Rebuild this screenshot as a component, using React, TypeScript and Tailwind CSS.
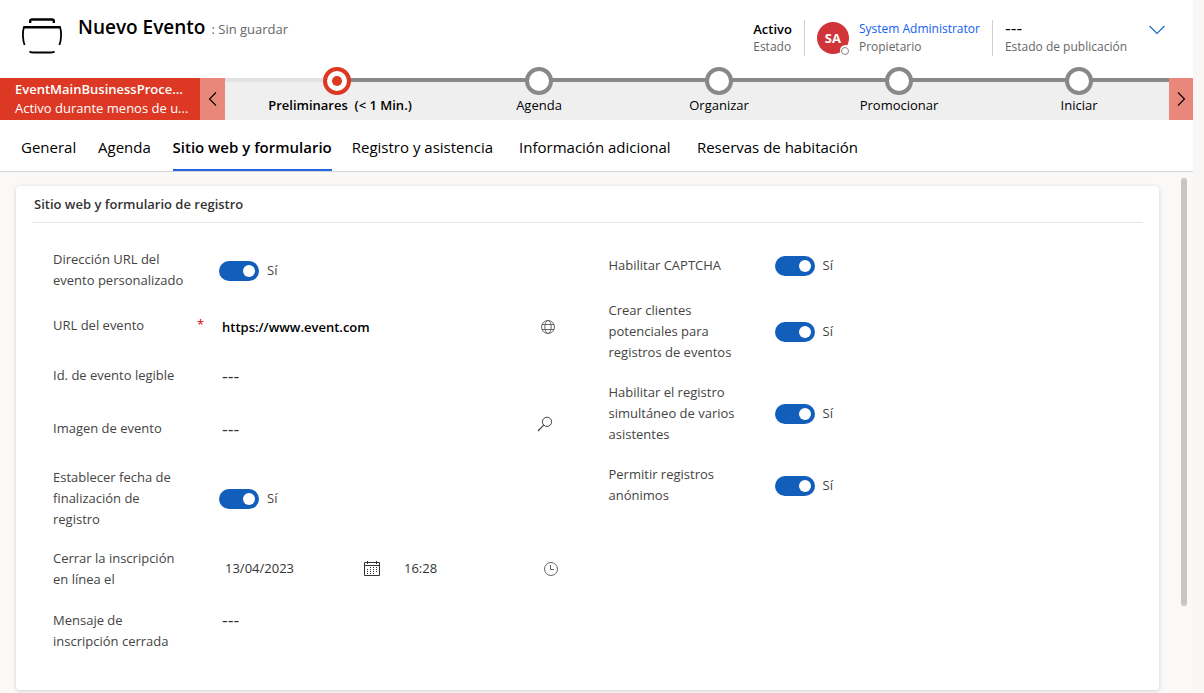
import { useState, type ReactNode } from "react";

const stages = ["Agenda", "Organizar", "Promocionar", "Iniciar"];

const tabs = [
  "General",
  "Agenda",
  "Sitio web y formulario",
  "Registro y asistencia",
  "Información adicional",
  "Reservas de habitación",
];

function EventIcon() {
  return (
    <svg className="h-9 w-10" viewBox="0 0 40 36" fill="none" stroke="#000" aria-hidden="true">
      <path d="M8.200 5V3Q8.200 1.500 10 1.500H30Q31.800 1.500 31.800 3V5" strokeWidth="2.400" />
      <path d="M2.500 10V9.200H37.500V10" strokeWidth="2.400" />
      <path d="M2 9C0.400 14 0.600 22 2.600 27" strokeWidth="1.800" />
      <path d="M38 9C39.600 14 39.400 22 37.400 27" strokeWidth="1.800" />
      <path d="M7.500 33.500Q9 34.600 12 34.600H28Q31 34.600 32.500 33.500" strokeWidth="2" />
    </svg>
  );
}

function Chevron({ d, className }: { d: string; className: string }) {
  return (
    <svg className={className} viewBox="0 0 16 16" fill="none" stroke="currentColor" aria-hidden="true">
      <path d={d} strokeWidth="1.100" />
    </svg>
  );
}

function GlobeIcon() {
  return (
    <svg className="size-4" viewBox="0 0 16 16" fill="none" stroke="#666" aria-hidden="true">
      <circle cx="8" cy="8" r="6.500" />
      <ellipse cx="8" cy="8" rx="3.200" ry="6.500" />
      <path d="M2 5.500H14M2 10.500H14" />
    </svg>
  );
}

function SearchIcon() {
  return (
    <svg className="size-4" viewBox="0 0 16 16" fill="none" stroke="#444" aria-hidden="true">
      <circle cx="10" cy="5.800" r="4.600" />
      <path d="M6.700 9.200L1 15" strokeWidth="1.200" />
    </svg>
  );
}

function CalendarIcon() {
  return (
    <svg className="size-4" viewBox="0 0 16 16" fill="none" stroke="#333" aria-hidden="true">
      <path d="M0.500 1.500H15.500V14.500H0.500ZM0.500 4.500H15.500M3.500 0V3M12.500 0V3" />
      <path d="M6 6.500H14M3 8.500H14M3 10.500H14M3 12.500H11" strokeDasharray="1 2" />
    </svg>
  );
}

function ClockIcon() {
  return (
    <svg className="size-4" viewBox="0 0 16 16" fill="none" stroke="#666" aria-hidden="true">
      <circle cx="8" cy="8" r="6.500" />
      <path d="M7.500 4V8.500H11" />
    </svg>
  );
}

function Row({
  id,
  label,
  height,
  required,
  alignTop,
  children,
}: {
  id: string;
  label: string;
  height: string;
  required?: boolean;
  alignTop?: boolean;
  children: ReactNode;
}) {
  return (
    <div className={`flex ${alignTop ? "items-start pt-3" : "items-center"} ${height}`}>
      <label htmlFor={id} className="w-[134px] shrink-0 leading-[21px] text-[#444]">
        {label}
      </label>
      <span className="w-8 shrink-0 pl-2.5 text-[#e00000]">{required ? "*" : ""}</span>
      {children}
    </div>
  );
}

function Toggle({ id }: { id: string }) {
  const [on, setOn] = useState(true);
  return (
    <div className="flex items-center gap-2 pt-0.5">
      <input
        id={id}
        type="checkbox"
        role="switch"
        checked={on}
        onChange={() => setOn(!on)}
        className="flex h-5 w-10 appearance-none items-center rounded-full bg-[#8a8886] px-1 before:size-3 before:rounded-full before:bg-white checked:justify-end checked:bg-[#115ebb]"
      />
      <span className="text-[#444]">{on ? "Sí" : "No"}</span>
    </div>
  );
}

function TextValue({ id, value }: { id: string; value?: string }) {
  return (
    <input
      id={id}
      type="text"
      defaultValue={value ?? "---"}
      className={`h-[21px] w-0 min-w-0 flex-1 bg-transparent pl-[3px] outline-none ${value ? "font-semibold text-black" : "font-['DejaVu_Sans',sans-serif] text-base text-[#333]"}`}
    />
  );
}

function IconButton({ label, children }: { label: string; children: ReactNode }) {
  return (
    <button type="button" aria-label={label} className="shrink-0">
      {children}
    </button>
  );
}

export default function App() {
  const [active, setActive] = useState(tabs[2]);
  return (
    <div className="flex min-h-screen bg-[#f8f7f6] font-['Open_Sans',sans-serif] text-[13px] text-black">
      <div className="flex min-w-0 flex-1 flex-col bg-[#faf9f8]">
        <header className="flex h-[78px] items-start bg-white pl-[22px]">
          <div className="pt-[18px]">
            <EventIcon />
          </div>
          <div className="flex items-baseline gap-1.5 pt-[13px] pl-4">
            <h1 className="text-[19px] leading-7 font-semibold">Nuevo Evento</h1>
            <span className="text-[#666]">: Sin guardar</span>
          </div>
          <div className="ml-auto flex items-center pt-5 leading-[18px]">
            <div className="pr-3">
              <div className="font-semibold">Activo</div>
              <div className="text-xs leading-[18px] text-[#666]">Estado</div>
            </div>
            <div className="flex items-center gap-2.5 border-x border-[#d2d0ce] px-3">
              <div className="relative flex size-8 items-center justify-center rounded-full bg-[#d13438] font-bold text-white">
                SA
                <span className="absolute -right-0.5 -bottom-0.5 flex size-[11px] items-center justify-center rounded-full bg-white">
                  <span className="size-2 rounded-full border border-[#8a8886]" />
                </span>
              </div>
              <div>
                <a href="#propietario" className="block text-xs leading-[18px] text-[#1160f5]">
                  System Administrator
                </a>
                <div className="text-xs leading-[18px] text-[#666]">Propietario</div>
              </div>
            </div>
            <div className="pl-3">
              <div className="font-['DejaVu_Sans',sans-serif] text-base leading-[18px]">---</div>
              <div className="text-xs leading-[18px] text-[#666]">Estado de publicación</div>
            </div>
          </div>
          <button type="button" aria-label="Más campos" className="mt-[22px] mr-7 ml-[22px] text-[#0f6cbd]">
            <Chevron d="M0.500 4L8 11.500L15.500 4" className="size-4" />
          </button>
        </header>

        <section className="flex h-[42px] bg-[#efefef]">
          <div className="w-[200px] bg-[#dc3823] pt-0.5 pl-[15px] leading-[19px] text-white">
            <div className="font-semibold">EventMainBusinessProce...</div>
            <div>Activo durante menos de u...</div>
          </div>
          <button type="button" aria-label="Anterior" className="flex w-[25px] items-center justify-center bg-[#e9877b]">
            <Chevron d="M11 1.500L4.500 8L11 14.500" className="size-4" />
          </button>
          <ol className="flex min-w-0 flex-1">
            <li className="flex flex-[224] flex-col items-center">
              <div className="flex h-1 w-full">
                <div className="w-1/2 bg-[#e1e1e1]" />
                <div className="w-1/2 bg-[#8a8886]" />
              </div>
              <span className="relative -mt-[15px] flex size-7 items-center justify-center rounded-full border-4 border-[#dc3823] bg-white">
                <span className="size-2.5 rounded-full bg-[#dc3823]" />
              </span>
              <button type="button" className="pl-1.5 leading-5 font-semibold whitespace-pre">
                {"Preliminares  (< 1 Min.)"}
              </button>
            </li>
            {stages.map((stage) => (
              <li key={stage} className="flex flex-[180] flex-col items-center">
                <div className="h-1 w-full bg-[#8a8886]" />
                <span className="relative -mt-[15px] size-7 rounded-full border-4 border-[#8a8886] bg-white" />
                <button type="button" className="leading-5">
                  {stage}
                </button>
              </li>
            ))}
          </ol>
          <button type="button" aria-label="Siguiente" className="flex w-6 items-center justify-center bg-[#e9877b]">
            <Chevron d="M5 1.500L11.500 8L5 14.500" className="size-4" />
          </button>
        </section>

        <nav role="tablist" className="flex h-[52px] gap-5 border-b border-[#d6d6d6] bg-white pl-[21px] text-[15px]">
          {tabs.map((tab) => (
            <button
              key={tab}
              type="button"
              role="tab"
              aria-selected={tab === active}
              data-label={tab}
              onClick={() => setActive(tab)}
              className={`border-b-2 pt-1.5 text-left whitespace-nowrap after:invisible after:block after:h-0 after:overflow-hidden after:font-semibold after:content-[attr(data-label)] ${tab === active ? "border-[#2266e3] font-semibold" : "border-transparent"}`}
            >
              {tab}
            </button>
          ))}
        </nav>

        <div className="flex flex-1 pb-[3px]">
          <main className="ml-4 min-w-0 flex-1 pt-3.5">
            <section className="rounded bg-white px-4 pb-6 shadow-[0_1px_4px_rgba(0,0,0,0.16)]">
              <h2 className="h-[37px] border-b border-[#e6e6e6] pl-0.5 leading-9 font-semibold text-[#333]">
                Sitio web y formulario de registro
              </h2>
              <form className="grid grid-cols-2 pt-[17px]">
                <div className="pr-[29px] pl-[21px]">
                  <Row id="custom-url" label="Dirección URL del evento personalizado" height="h-[60px]">
                    <Toggle id="custom-url" />
                  </Row>
                  <Row id="event-url" label="URL del evento" height="h-[50px]" required>
                    <div className="flex flex-1 items-center pt-1 pr-[3px]">
                      <TextValue id="event-url" value="https://www.event.com" />
                      <IconButton label="Abrir URL">
                        <GlobeIcon />
                      </IconButton>
                    </div>
                  </Row>
                  <Row id="readable-id" label="Id. de evento legible" height="h-[50px]">
                    <div className="flex flex-1 pt-1">
                      <TextValue id="readable-id" />
                    </div>
                  </Row>
                  <Row id="event-image" label="Imagen de evento" height="h-14">
                    <div className="flex flex-1 items-start pr-1.5">
                      <div className="flex flex-1 pt-1">
                        <TextValue id="event-image" />
                      </div>
                      <IconButton label="Buscar imagen">
                        <SearchIcon />
                      </IconButton>
                    </div>
                  </Row>
                  <Row id="set-end-date" label="Establecer fecha de finalización de registro" height="h-[84px]">
                    <Toggle id="set-end-date" />
                  </Row>
                  <Row id="close-date" label="Cerrar la inscripción en línea el" height="h-[58px]">
                    <div className="flex flex-1 items-center">
                      <input
                        id="close-date"
                        type="text"
                        defaultValue="13/04/2023"
                        className="w-[145px] bg-transparent pl-1.5 text-[#333] outline-none"
                      />
                      <IconButton label="Elegir fecha">
                        <CalendarIcon />
                      </IconButton>
                      <input
                        type="text"
                        aria-label="Hora de cierre"
                        defaultValue="16:28"
                        className="ml-6 w-0 min-w-0 flex-1 bg-transparent text-[#333] outline-none"
                      />
                      <IconButton label="Elegir hora">
                        <ClockIcon />
                      </IconButton>
                    </div>
                  </Row>
                  <Row id="closed-message" label="Mensaje de inscripción cerrada" height="h-[68px]" alignTop>
                    <TextValue id="closed-message" />
                  </Row>
                </div>
                <div className="pl-[21px]">
                  <Row id="captcha" label="Habilitar CAPTCHA" height="h-[50px]">
                    <Toggle id="captcha" />
                  </Row>
                  <Row id="create-leads" label="Crear clientes potenciales para registros de eventos" height="h-[82px]">
                    <Toggle id="create-leads" />
                  </Row>
                  <Row id="multi-register" label="Habilitar el registro simultáneo de varios asistentes" height="h-[82px]">
                    <Toggle id="multi-register" />
                  </Row>
                  <Row id="anonymous" label="Permitir registros anónimos" height="h-[62px]">
                    <Toggle id="anonymous" />
                  </Row>
                </div>
              </form>
            </section>
          </main>
          <div className="flex w-[34px] flex-col pt-1.5 pl-[22px]">
            <div className="h-[428px] w-1.5 rounded-full bg-[#c8c6c4]" />
          </div>
        </div>
      </div>
      <div className="w-[11px] shrink-0" />
    </div>
  );
}
